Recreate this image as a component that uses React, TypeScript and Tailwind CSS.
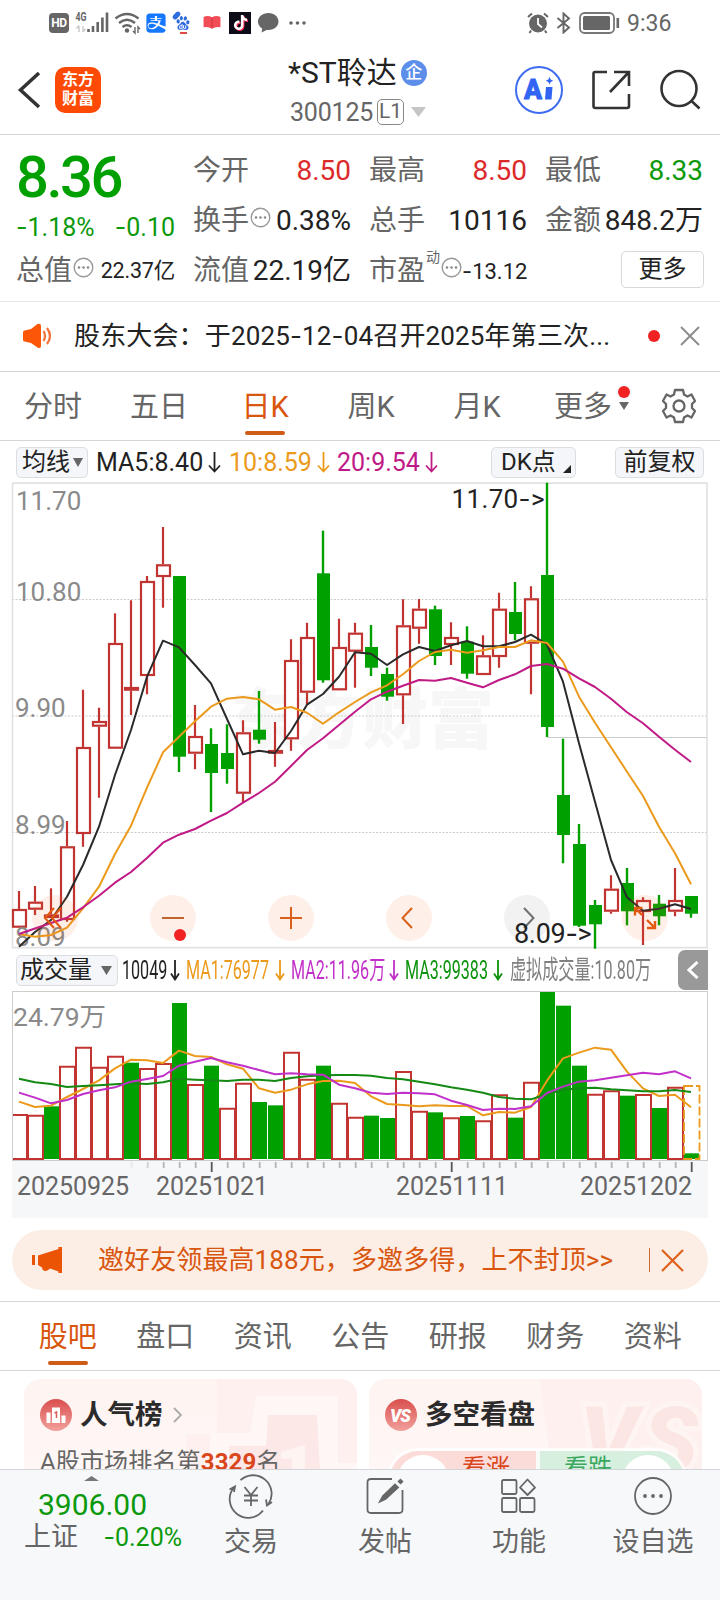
import React from 'react';
import clsx from 'clsx';
import { FaAlipay, FaTiktok } from 'react-icons/fa6';
import { SiBaidu } from 'react-icons/si';

const RED = '#c23431';
const GREEN = '#00a000';
const FONT = 'Roboto, "Noto Sans CJK SC", sans-serif';

const STEP = 16;
const cx = (i: number) => 19 + STEP * i;

type Candle = ['r' | 'g', number, number, number, number];

// [direction, high, body top, body bottom, low]
const candles: Candle[] = [
  ['r', 891, 909, 927.7, 928],
  ['r', 886, 901.7, 909.7, 915],
  ['r', 888.3, 914.5, 918, 918],
  ['r', 821, 846.3, 920, 921.7],
  ['r', 689.7, 747, 834, 846.7],
  ['r', 707.7, 721, 726.7, 797.7],
  ['r', 613.3, 643, 748.7, 748.7],
  ['r', 600.3, 687, 690.7, 715],
  ['r', 576, 581, 676, 694.3],
  ['r', 527, 564.3, 577, 607.7],
  ['g', 576, 576, 756.7, 772],
  ['r', 705, 736, 753.7, 769.3],
  ['g', 728.3, 744, 773, 812],
  ['g', 724.3, 753, 769, 783.7],
  ['r', 720.3, 732.3, 793.7, 802.3],
  ['g', 691, 729.7, 739.7, 743.7],
  ['r', 722, 750, 753.7, 766.7],
  ['r', 639.3, 660, 739.3, 750.7],
  ['r', 622.7, 637, 692.7, 705],
  ['g', 530.7, 573.3, 680.3, 682.7],
  ['r', 618.7, 647, 690.3, 690.3],
  ['r', 622.7, 632.7, 651.7, 687.7],
  ['g', 625, 647, 667.7, 676],
  ['g', 667.7, 674, 696.7, 700.7],
  ['r', 599.3, 625.3, 695.3, 724],
  ['r', 599, 608.7, 628.7, 643.7],
  ['g', 605.7, 609.3, 656, 665],
  ['r', 622.3, 637, 645, 665],
  ['g', 626.3, 641.7, 673.7, 678.7],
  ['r', 635.3, 655.3, 675, 675],
  ['r', 592.7, 608.7, 657, 667.7],
  ['g', 582, 612, 634, 640.3],
  ['r', 586.3, 598.3, 643.7, 694.3],
  ['g', 482.7, 575, 727, 737],
  ['g', 738.7, 795, 835, 863.3],
  ['g', 824, 844, 925.7, 927],
  ['g', 900, 905, 924.3, 948.7],
  ['r', 875.3, 888.7, 911.7, 913.7],
  ['g', 868, 883, 911.3, 925.3],
  ['r', 897.3, 900, 912, 945],
  ['g', 895, 903.7, 916.3, 925.3],
  ['r', 868, 900, 911.7, 916.3],
  ['g', 896, 896, 913.7, 917.7],
];

const ma5 = [
  946.7, 932, 920, 896.7, 865, 826.7, 775, 730, 676.7, 640.7, 647.3, 665, 683.3, 719, 754.3, 750.7, 753, 731, 704.7,
  694, 676.7, 652.3, 653.7, 665, 654.3, 647, 651, 645.3, 641, 646.3, 646.3, 642, 634.7, 644.3, 681.7, 743.3, 801.7,
  860, 897.3, 910.7, 908.7, 904.3, 909,
];
const ma10 = [
  934, 936.7, 935, 927.7, 908.3, 886.7, 854, 825.7, 787.7, 752.3, 736.7, 721.3, 706.7, 698.7, 697, 699.3, 709.7, 707,
  712.7, 723.7, 712.3, 702, 692.3, 685.3, 674.3, 661, 652, 649.7, 652.7, 650.3, 647, 647, 640.3, 643, 661.7, 696.7,
  722.7, 747.3, 771.7, 796, 826.7, 853.3, 884.3,
];
const ma20 = [
  934, 928.5, 923, 917.7, 907.3, 895.7, 882.7, 872, 858, 842.7, 834.7, 829, 820.7, 813, 802.7, 793, 781.7, 766, 750,
  738.3, 725, 711.7, 699.3, 691.7, 685.7, 680, 680.7, 678, 682.7, 687.3, 680, 674.3, 666, 664, 668.7, 678.3, 687,
  698.7, 712.3, 723.3, 736.7, 749.7, 762,
];

// volume bars and their averages, in thirds of a pixel below y=945
const volumes = [
  507, 509, 484, 362, 305, 365, 332, 353, 369, 354, 174, 417, 362, 488, 413, 471, 481, 320, 401, 362, 473, 515, 512,
  519, 378, 497, 502, 517, 513, 526, 448, 518, 410, 141, 182, 362, 446, 436, 452, 447, 489, 425, 625,
];
const volGreen = [2, 7, 10, 12, 15, 16, 19, 22, 23, 26, 28, 31, 33, 34, 35, 38, 40, 42];
const volMa1 = [
  470, 486, 482, 456, 432, 406, 370, 344, 346, 354, 317, 333, 336, 358, 371, 430, 443, 434, 418, 408, 407, 414, 454,
  477, 480, 484, 481, 483, 483, 511, 501, 503, 486, 407, 340, 323, 308, 314, 380, 430, 453, 449, 487,
];
const volMa2 = [
  443, 458, 475, 465, 447, 436, 427, 410, 402, 393, 362, 350, 339, 352, 362, 375, 388, 385, 388, 389, 419, 430, 443,
  447, 443, 445, 448, 467, 480, 495, 491, 492, 484, 444, 425, 410, 406, 398, 391, 383, 388, 379, 400,
];
const volMa3 = [
  401, 412, 417, 426, 423, 421, 418, 415, 417, 412, 401, 404, 406, 408, 404, 404, 408, 399, 394, 391, 390, 390, 392,
  399, 403, 410, 418, 427, 434, 443, 456, 461, 463, 447, 435, 430, 428, 433, 436, 439, 439, 435, 441,
];
const volY = (v: number) => 945 + v / 3;

const linePoints = (values: number[]) => values.map((y, i) => `${cx(i)},${y}`).join(' ');

// Roboto's hyphen is too short next to its digits
const Num: React.FC<{ children: string }> = ({ children }) => (
  <>
    {children.split(/(-)/).map((part, i) =>
      part === '-' ? (
        <span key={i} className="font-['Inter']">
          -
        </span>
      ) : (
        part
      )
    )}
  </>
);

const DownArrow: React.FC<{ className?: string; w?: number }> = ({ className, w = 13 }) => (
  <svg className={clsx('shrink-0', className)} width={w} height="22" viewBox={`0 0 ${w} 22`} fill="none" stroke="currentColor" strokeWidth="1.800">
    <path d={`M${w / 2} 1V20M1 14.500L${w / 2} 20.500L${w - 1} 14.500`} />
  </svg>
);

const MoreDots = () => (
  <svg className="-mt-[7px] ml-[1px] shrink-0" width="21" height="21" viewBox="0 0 21 21">
    <circle cx="10.5" cy="10.5" r="9.3" fill="none" stroke="#999" strokeWidth="1.4" />
    <circle cx="6" cy="10.5" r="1.3" fill="#888" />
    <circle cx="10.5" cy="10.5" r="1.3" fill="#888" />
    <circle cx="15" cy="10.5" r="1.3" fill="#888" />
  </svg>
);

const StatusBar = () => (
  <div className="flex h-[45px] shrink-0 items-center pl-[49px] text-[#666]">
    <div className="flex h-5 w-5 items-center justify-center rounded-[4px] bg-[#666] text-[12px] leading-none font-bold tracking-[-0.5px] text-white">
      HD
    </div>
    <svg className="ml-[6px]" width="34" height="24" viewBox="75 11 34 24">
      <text x="75.5" y="21" fontSize="12" fontWeight="700" fill="#666" textLength="11" lengthAdjust="spacingAndGlyphs">
        4G
      </text>
      <path d="M79 26v6M76.500 28.500L79 25.500M83 32v-6M85.500 29L83 32" stroke="#ccc" strokeWidth="1.500" fill="none" />
      <path d="M88.500 29v3M93 26v6M97.700 22v10M102.400 17.500v14.500M107 12.500v19.500" stroke="#666" strokeWidth="2.600" />
    </svg>
    <svg className="ml-[5px]" width="28" height="24" viewBox="114 10 28 24" fill="none" stroke="#666" strokeWidth="2.500">
      <path d="M115.500 17.500Q127 8.500 138.500 17.500M119 22Q127 15.500 135 22M122.500 26Q127 22.500 131.500 26" />
      <circle cx="127" cy="29.500" r="2.200" fill="#666" stroke="none" />
      <path d="M135 26v6l-2-2M138 32v-6l2 2" strokeWidth="1.400" />
    </svg>
    <FaAlipay className="ml-[3px] rounded-[5px] text-[#1677ff]" size={22} />
    <div className="relative ml-[9px] w-[16px]">
      <SiBaidu className="text-[#2f6bdc]" size={14} />
      <span className="absolute -top-[3px] -left-[4px] h-[5px] w-[9px] -rotate-45 rounded-full bg-[#2f6bdc]" />
      <span className="absolute -bottom-[4px] left-[4px] h-[2px] w-[7px] bg-[#e0484a]" />
    </div>
    <svg className="ml-[11px]" width="18" height="15" viewBox="0 0 18 16">
      <path d="M0 2Q5 0 9 2.500Q13 0 18 2V13Q13 12 9 14.500Q5 12 0 13Z" fill="#f24c57" />
      <path d="M9 2.500V14.500" stroke="#c93642" strokeWidth="1" />
    </svg>
    <div className="ml-[8px] flex h-[22px] w-[22px] items-center justify-center bg-[#0c0c18]">
      <FaTiktok size={15} className="text-white drop-shadow-[1px_1px_0_#fe2c55]" />
    </div>
    <svg className="ml-[7px]" width="21" height="20" viewBox="0 0 21 20">
      <path d="M10.500 0C4.500 0 0 3.800 0 8.600c0 3 1.600 5.400 4.200 7L3.600 19.500l5-2.500c.6.100 1.200.100 1.900.100 5.800 0 10-3.700 10-8.500S16.400 0 10.500 0Z" fill="#666" />
    </svg>
    <svg className="ml-[10px]" width="18" height="4" viewBox="0 0 18 4" fill="#666">
      <circle cx="2" cy="2" r="1.800" />
      <circle cx="8.500" cy="2" r="1.800" />
      <circle cx="15" cy="2" r="1.800" />
    </svg>
    <svg className="ml-[220px]" width="22" height="22" viewBox="0 0 22 22">
      <circle cx="11" cy="11.500" r="9" fill="#666" />
      <path d="M11 6v6l4 3.500" fill="none" stroke="#fff" strokeWidth="1.800" />
      <path d="M1 5L5 1.500M17 1.500L21 5M4 18.500L2.500 21M18 18.500L19.500 21" stroke="#666" strokeWidth="2" />
    </svg>
    <svg className="ml-[7px]" width="15" height="22" viewBox="0 0 15 22" fill="none" stroke="#666" strokeWidth="1.900">
      <path d="M1.500 6L13 15.500L7.500 20.500V1.500L13 6.500L1.500 16" />
    </svg>
    <svg className="ml-[8px]" width="42" height="22" viewBox="0 0 42 22">
      <rect x="1" y="1" width="34" height="20" rx="4.500" fill="none" stroke="#777" strokeWidth="1.800" />
      <rect x="4" y="4" width="27" height="14" rx="1.500" fill="#666" />
      <path d="M38.800 6v10" stroke="#666" strokeWidth="2.600" />
    </svg>
    <span className="mt-[2px] ml-[6px] text-[23px] leading-none">9:36</span>
  </div>
);

const Header = () => (
  <header className="flex h-[90px] shrink-0 items-center border-b border-[#d6d6d6] pl-[17px]">
    <svg width="24" height="38" viewBox="0 0 24 38" fill="none" stroke="#333" strokeWidth="3.500">
      <path d="M22 2L3.500 19L22 36" />
    </svg>
    <div className="ml-[14px] flex h-[46px] w-[46px] flex-col items-center justify-center rounded-[10px] bg-[#ff4a05] text-[16px] leading-[18.500px] font-bold text-white">
      <span>东方</span>
      <span>财富</span>
    </div>
    <div className="mt-[4px] ml-[187px] w-[146px]">
      <div className="flex items-center text-[30px] leading-none whitespace-nowrap text-[#222]">
        *ST聆达
        <span className="ml-[4px] flex h-[26px] w-[26px] items-center justify-center rounded-full bg-[#5d8eea] text-[17px] leading-none font-medium text-white">
          企
        </span>
      </div>
      <div className="mt-[10px] flex items-center text-[25px] leading-[26px] text-[#666]">
        <span className="w-[88px] pt-[2px] pl-[2px] tracking-[-0.200px]">300125</span>
        <span className="ml-[1px] flex h-[26px] w-[27px] items-center justify-center rounded-[5px] border-[1.500px] border-[#888] text-[21px] leading-none">
          L1
        </span>
        <svg className="ml-[7px]" width="15" height="10" viewBox="0 0 15 10">
          <path d="M0 0H15L7.500 10Z" fill="#c6c6c6" />
        </svg>
      </div>
    </div>
    <svg className="ml-[80px]" width="50" height="50" viewBox="514 65 50 50" fontFamily={FONT}>
      <circle cx="539" cy="90" r="23" fill="none" stroke="#3d6cf0" strokeWidth="2" />
      <text x="524" y="99" fontSize="28" fontWeight="900" fill="#3164f4" stroke="#3164f4" strokeWidth="0.800" textLength="18" lengthAdjust="spacingAndGlyphs">
        A
      </text>
      <path d="M546 87h6.500l-1 12.500h-6.500Z" fill="#3164f4" />
      <path d="M549.500 77l1.200 2.500 2.500 1.200-2.500 1.200-1.200 2.500-1.200-2.500-2.500-1.200 2.500-1.200Z" fill="#3164f4" />
    </svg>
    <svg className="ml-[27px]" width="40" height="40" viewBox="591 70 40 40" fill="none" stroke="#333" strokeWidth="2.600">
      <path d="M607 72H595Q593.500 72 593.500 74V106Q593.500 108 595.500 108H627Q629 108 629 106V94" />
      <path d="M614 72H629V86M628.500 72.500L610 92" />
    </svg>
    <svg className="ml-[29px]" width="41" height="41" viewBox="660 69 41 41" fill="none" stroke="#333" strokeWidth="2.600">
      <circle cx="679" cy="88.500" r="17.500" />
      <path d="M691.500 101L699.500 108.500" />
    </svg>
  </header>
);

interface CellProps {
  label: string;
  value: string;
  color?: string;
}

const Cell: React.FC<CellProps> = ({ label, value, color = 'text-[#222]' }) => (
  <div className="flex h-[50px] items-center justify-between">
    <span className="text-[#666]">{label}</span>
    <span className={color}>{value}</span>
  </div>
);

const Quote = () => (
  <section className="flex h-[167px] shrink-0 gap-[18px] border-b border-[#e6e6e6] pt-[11px] pr-4 pl-4 text-[28px] leading-none whitespace-nowrap">
    <div className="w-[159px]">
      <div className="h-[65px] pt-[2px] text-[58px] leading-none font-medium tracking-[-2.500px] text-[#00a000]">8.36</div>
      <div className="mb-[2px] flex h-[33px] items-center justify-between text-[25px] text-[#0c990c]">
        <span>
          <Num>-1.18%</Num>
        </span>
        <span>
          <Num>-0.10</Num>
        </span>
      </div>
      <div className="flex h-[50px] items-center">
        <span className="text-[#666]">总值</span>
        <MoreDots />
        <span className="ml-auto text-[21.500px] tracking-[-0.200px] text-[#222]">22.37亿</span>
      </div>
    </div>
    <div className="w-[158px]">
      <Cell label="今开" value="8.50" color="text-[#dc2a2a]" />
      <div className="flex h-[50px] items-center">
        <span className="text-[#666]">换手</span>
        <MoreDots />
        <span className="ml-auto text-[#222]">0.38%</span>
      </div>
      <Cell label="流值" value="22.19亿" />
    </div>
    <div className="w-[158px]">
      <Cell label="最高" value="8.50" color="text-[#dc2a2a]" />
      <Cell label="总手" value="10116" />
      <div className="flex h-[50px] items-center">
        <span className="text-[#666]">市盈</span>
        <span className="-mt-7 ml-[1px] text-[14px] text-[#666]">动</span>
        <MoreDots />
        <span className="ml-auto text-[22px] text-[#222]">
          <Num>-13.12</Num>
        </span>
      </div>
    </div>
    <div className="w-[158px]">
      <Cell label="最低" value="8.33" color="text-[#0c990c]" />
      <Cell label="金额" value="848.2万" />
      <div className="-mt-[2px] flex h-[50px] items-center justify-end">
        <button className="-mr-[1px] h-[37px] w-[83px] rounded-[5px] border border-[#d8d8d8] text-[24px] leading-none text-[#222]">更多</button>
      </div>
    </div>
  </section>
);

const Notice = () => (
  <div className="flex h-[70px] shrink-0 items-center border-b border-[#d6d6d6] pb-[1px] pl-[22px] text-[26px] leading-none text-[#222]">
    <svg width="31" height="26" viewBox="0 0 31 26">
      <path d="M1 9Q1 8 2.500 7.500L9 6L15.500 1Q19 0 19 3V23Q19 26 15.500 24.500L9 20L2.500 18.500Q1 18 1 17Z" fill="#fb5707" />
      <path d="M21.500 8Q24.500 13 21.500 18M25 5Q31 13 25 21" fill="none" stroke="#f4733a" strokeWidth="2.300" />
    </svg>
    <span className="ml-[21px] w-[561px] tracking-[0.150px] whitespace-nowrap">
      <Num>股东大会：于2025-12-04召开2025年第三次...</Num>
    </span>
    <span className="ml-[13px] h-3 w-3 rounded-full bg-[#f02222]" />
    <svg className="ml-[20px]" width="20" height="20" viewBox="0 0 20 20" stroke="#8c8c8c" strokeWidth="2">
      <path d="M1 1L19 19M19 1L1 19" />
    </svg>
  </div>
);

const periods = ['分时', '五日', '日K', '周K', '月K', '更多'];

const PeriodTabs = () => (
  <nav className="flex h-[69px] shrink-0 border-b border-[#d6d6d6] text-[29px] leading-none text-[#666]">
    {periods.map((name) => (
      <div key={name} className={clsx('relative flex w-[106px] items-center justify-center pt-[3px]', name === '日K' && 'text-[#d9560f]')}>
        {name}
        {name === '日K' && <span className="absolute bottom-[5px] h-[4.500px] w-10 rounded-full bg-[#cf5c18]" />}
        {name === '更多' && (
          <>
            <span className="absolute top-[14px] right-[6px] h-3 w-3 rounded-full bg-[#f02222]" />
            <svg className="absolute top-[30px] right-[7px]" width="10" height="8" viewBox="0 0 10 8">
              <path d="M0 0H10L5 8Z" fill="#666" />
            </svg>
          </>
        )}
      </div>
    ))}
    <div className="flex flex-1 items-center justify-center pl-[2px]">
      <svg width="36" height="36" viewBox="-18 -18 36 36" fill="none" stroke="#666" strokeWidth="2.300" strokeLinejoin="round">
        <path d="M-4 -16H4L5 -11.500L8.500 -9.500L12.500 -11.500L16 -5L13 -2V2L16 5L12.500 11.500L8.500 9.500L5 11.500L4 16H-4L-5 11.500L-8.500 9.500L-12.500 11.500L-16 5L-13 2V-2L-16 -5L-12.500 -11.500L-8.500 -9.500L-5 -11.500Z" />
        <circle r="5.500" />
      </svg>
    </div>
  </nav>
);

const chip = 'flex h-[31px] shrink-0 items-center rounded-[5px] border border-[#dcdee2] bg-[#f5f6f9] text-[24px] leading-none text-[#222]';

const MaRow = () => (
  <div className="flex h-[41px] shrink-0 items-center pt-[1px] pl-4 text-[25px] leading-none whitespace-nowrap">
    <div className={clsx(chip, 'w-[72px] pl-[5px]')}>
      均线
      <svg className="ml-[3px]" width="10" height="9" viewBox="0 0 10 9">
        <path d="M0 0H10L5 9Z" fill="#666" />
      </svg>
    </div>
    <span className="mt-[1px] ml-[8px] w-[112px] text-[#222]">MA5:8.40</span>
    <DownArrow className="text-[#222]" />
    <span className="mt-[1px] ml-[8px] w-[88px] text-[#eb9a1b]">10:8.59</span>
    <DownArrow className="text-[#eb9a1b]" />
    <span className="mt-[1px] ml-[7px] w-[88px] text-[#c01a86]">20:9.54</span>
    <DownArrow className="text-[#c01a86]" />
    <div className={clsx(chip, 'ml-[53px] w-[85px] pl-[9px]')}>
      DK点
      <svg className="mt-[14px] ml-[7px] shrink-0" width="8" height="8" viewBox="0 0 8 8">
        <path d="M8 0V8H0Z" fill="#222" />
      </svg>
    </div>
    <div className={clsx(chip, 'ml-[39px] w-[89px] justify-center')}>前复权</div>
  </div>
);

const KLineChart = () => (
  <div className="relative h-[467px] shrink-0">
    <svg width="720" height="467" viewBox="0 482 720 467" fontFamily={FONT}>
      <text x="230" y="743" fontSize="66" fontWeight="900" fill="#f7f7f7">
        东方财富
      </text>
      <path d="M12 599.500H707M12 716H707M12 832.500H707" stroke="#ccc" strokeDasharray="2 1.500" />
      <path d="M12.500 483V948M707 483V948" stroke="#e0e0e0" strokeWidth="1.500" />
      <path d="M12 483.200H708M12 947.700H708" stroke="#e2e2e2" strokeWidth="1.800" />
      <path d="M547 737.500H707" stroke="#ccc" />
      {candles.map(([dir, high, top, bottom, low], i) => {
        const x = cx(i);
        if (dir === 'g') {
          return (
            <g key={i} fill={GREEN}>
              <rect x={x - 1.2} y={high} width="2.4" height={low - high} />
              <rect x={x - 6} y={top} width="13" height={bottom - top} />
            </g>
          );
        }
        return (
          <g key={i} stroke={RED} strokeWidth="2.200">
            <path d={`M${x} ${high}V${top}M${x} ${bottom}V${low}`} />
            <rect x={x - 6} y={top + 1} width="13" height={Math.max(bottom - top - 2, 0.5)} fill={bottom - top < 4.5 ? RED : '#fff'} />
          </g>
        );
      })}
      <g fontSize="26" fill="#8a8a8a">
        <text x="16" y="509.500">11.70</text>
        <text x="16" y="600.500">10.80</text>
        <text x="15" y="716.500">9.90</text>
        <text x="15" y="833.500">8.99</text>
        <text x="15" y="945.500">8.09</text>
      </g>
      <g fill="none" strokeWidth="2" strokeLinejoin="round">
        <polyline points={linePoints(ma5)} stroke="#2a2a2a" />
        <polyline points={linePoints(ma10)} stroke="#eb9a1b" />
        <polyline points={linePoints(ma20)} stroke="#c01a86" />
      </g>
      <g fontSize="26" fill="#222">
        <text x="451.500" y="507.500" textLength="93">
          11.70<tspan fontFamily="Inter">-</tspan>&gt;
        </text>
      </g>
    </svg>

    {/* Floating chart controls */}
    <button className="absolute top-[413px] left-8 flex h-[46px] w-[46px] items-center justify-center rounded-full bg-[#f9651f]/10">
      <svg width="24" height="24" viewBox="0 0 24 24" fill="none" stroke="#e2590f" strokeWidth="2">
        <path d="M11 2L2 12L11 22M18 2L9 12L18 22" />
      </svg>
    </button>
    <button className="absolute top-[413px] left-[150px] flex h-[46px] w-[46px] items-center justify-center rounded-full bg-[#fef0e9]">
      <span className="h-[2px] w-[22px] bg-[#c0652f]" />
      <span className="absolute top-[34px] left-6 h-3 w-3 rounded-full bg-[#f02222]" />
    </button>
    <button className="absolute top-[413px] left-[268px] flex h-[46px] w-[46px] items-center justify-center rounded-full bg-[#fef0e9]">
      <svg width="22" height="22" viewBox="0 0 22 22" stroke="#d9601a" strokeWidth="2">
        <path d="M0 11H22M11 0V22" />
      </svg>
    </button>
    <button className="absolute top-[413px] left-[386px] flex h-[46px] w-[46px] items-center justify-center rounded-full bg-[#fef0e9]">
      <svg className="-ml-1" width="12" height="22" viewBox="0 0 12 22" fill="none" stroke="#d9601a" strokeWidth="2">
        <path d="M11 1L1.500 11L11 21" />
      </svg>
    </button>
    <button className="absolute top-[413px] left-[504px] flex h-[46px] w-[46px] items-center justify-center rounded-full bg-[#f2f2f2]">
      <svg className="ml-[3px]" width="12" height="22" viewBox="0 0 12 22" fill="none" stroke="#707070" strokeWidth="2">
        <path d="M1 1L10.500 11L1 21" />
      </svg>
    </button>
    <button className="absolute top-[413px] left-[622px] flex h-[46px] w-[46px] items-center justify-center rounded-full bg-[#f9651f]/10">
      <svg width="24" height="24" viewBox="0 0 24 24" fill="none" stroke="#e2590f" strokeWidth="2.400">
        <path d="M9.500 2H2V9.500M2 2L9 9M22 15V22H14M22 22L14 14" />
      </svg>
    </button>
    <span className="absolute top-[437px] left-[514px] text-[27px] leading-[30px] tracking-[-0.300px] whitespace-nowrap text-[#222]">
      <Num>8.09-&gt;</Num>
    </span>
  </div>
);

const Squeezed: React.FC<{ children: string; className: string }> = ({ children, className }) => (
  <div className={clsx('shrink-0', className)}>
    <span className="inline-block origin-left scale-x-[0.620]">{children}</span>
  </div>
);

const VolumeRow = () => (
  <div className="flex h-[42px] shrink-0 items-center pl-4 text-[26px] leading-none whitespace-nowrap">
    <div className={clsx(chip, 'w-[102px] pl-[3px]')}>
      成交量
      <svg className="ml-[9px]" width="11" height="9" viewBox="0 0 11 9">
        <path d="M0 0H11L5.500 9Z" fill="#666" />
      </svg>
    </div>
    <Squeezed className="ml-[4px] w-[48px] text-[#222]">10049</Squeezed>
    <DownArrow w={10} className="text-[#222]" />
    <Squeezed className="ml-[6px] w-[89px] text-[#eb9a1b]">MA1:76977</Squeezed>
    <DownArrow w={10} className="text-[#eb9a1b]" />
    <Squeezed className="ml-[6px] w-[98px] text-[#c130c9]">MA2:11.96万</Squeezed>
    <DownArrow w={10} className="text-[#c130c9]" />
    <Squeezed className="ml-[6px] w-[88px] text-[#0d930d]">MA3:99383</Squeezed>
    <DownArrow w={10} className="text-[#0d930d]" />
    <Squeezed className="ml-[7px] w-[168px] text-[#808080]">虚拟成交量:10.80万</Squeezed>
    <div className="flex h-10 w-[30px] shrink-0 items-center justify-center rounded-l-[7px] bg-[#999]">
      <svg width="12" height="18" viewBox="0 0 12 18" fill="none" stroke="#fff" strokeWidth="3">
        <path d="M10.500 1L2 9L10.500 17" />
      </svg>
    </div>
  </div>
);

const VolumeChart = () => (
  <svg className="shrink-0" width="720" height="227" viewBox="0 991 720 227" fontFamily={FONT}>
    <rect x="12" y="1160" width="696" height="58" fill="#f6f7f9" />
    <rect x="12.500" y="991.500" width="695" height="169" fill="#fff" stroke="#ccc" />
    {volumes.map((v, i) => {
      const x = cx(i);
      const y = volY(v);
      if (volGreen.includes(i)) {
        return <rect key={i} x={x - 7} y={y} width="15" height={1159 - y} fill={GREEN} />;
      }
      // the first bar is clipped by the frame and has no left side
      const d = i === 0 ? `M13 ${y + 1}H${x + 8}V1159H13` : `M${x - 7} 1159V${y + 1}H${x + 8}V1159Z`;
      return <path key={i} d={d} fill="#fff" stroke={RED} strokeWidth="2" />;
    })}
    <rect x="684" y="1086" width="15.500" height="73" fill="none" stroke="#eb9a1b" strokeWidth="1.800" strokeDasharray="9 3" />
    <g fill="none" strokeWidth="2" strokeLinejoin="round">
      <polyline points={linePoints(volMa1.map(volY))} stroke="#eb9a1b" />
      <polyline points={linePoints(volMa3.map(volY))} stroke="#148a14" />
      <polyline points={linePoints(volMa2.map(volY))} stroke="#c130c9" />
    </g>
    <text x="13" y="1025.500" fontSize="26.500" fill="#8a8a8a">
      24.79万
    </text>
    {candles.map((_, i) => {
      if (i < 7) return null;
      const major = i === 12 || i === 27 || i === 42;
      return (
        <path
          key={i}
          d={`M${cx(i) + 0.7} 1162V${major ? 1172 : 1168}`}
          stroke={major ? '#555' : '#b5b5b5'}
          strokeWidth="1.800"
          opacity={i === 7 ? 0.2 : i === 8 ? 0.6 : 1}
        />
      );
    })}
    <g fontSize="25" fill="#666">
      <text x="17" y="1195" textLength="112">20250925</text>
      <text x="156" y="1195" textLength="112">20251021</text>
      <text x="396" y="1195" textLength="112">20251111</text>
      <text x="580" y="1195" textLength="112">20251202</text>
    </g>
  </svg>
);

const Banner = () => (
  <div className="mx-3 mt-3 flex h-[60px] shrink-0 items-center rounded-full bg-[#fceee5] pl-5 text-[26px] leading-none text-[#d9560f]">
    <svg width="30" height="26" viewBox="0 0 30 26" fill="#ea5404">
      <path d="M0 8H3V18H0ZM6 8.500L26.500 2V0H30V26H26.500V24.500L18 21.500Q15 25 11.500 23.500Q10 22.500 10 20.500L6 18Z" />
    </svg>
    <span className="ml-[36px] w-[517px] tracking-[0.100px] whitespace-nowrap">邀好友领最高188元，多邀多得，上不封顶&gt;&gt;</span>
    <span className="ml-[34px] h-6 w-px bg-[#c96a35]" />
    <svg className="ml-[11px]" width="23" height="23" viewBox="0 0 23 23" stroke="#e0611c" strokeWidth="2.200">
      <path d="M1 1L22 22M22 1L1 22" />
    </svg>
  </div>
);

const sections = ['股吧', '盘口', '资讯', '公告', '研报', '财务', '资料'];

const SectionTabs = () => (
  <nav className="mt-[11px] flex h-[70px] shrink-0 border-y border-[#d6d6d6] pl-[19px] text-[29px] leading-none text-[#666]">
    {sections.map((name, i) => (
      <div key={name} className={clsx('relative flex w-[97.500px] items-center justify-center pt-[3px]', i === 0 && 'text-[#d9560f]')}>
        {name}
        {i === 0 && <span className="absolute bottom-[5px] h-[4px] w-10 rounded-full bg-[#cf5c18]" />}
      </div>
    ))}
  </nav>
);

const Cards = () => (
  <div className="flex min-h-0 flex-1 gap-3 overflow-hidden pt-[8px] pl-6">
    <div className="relative h-[180px] w-[333px] shrink-0 overflow-hidden rounded-2xl bg-gradient-to-b from-[#fef4f2] to-[#fffaf9]">
      <svg className="absolute top-0 right-0" width="180" height="92" viewBox="153 0 180 92">
        <path d="M193 0H333V92H162V55H193Z" fill="#fdf0ee" />
        <path d="M232 17H314V84H333V92H186V54H226Z" fill="#fef7f5" />
        <path d="M244 36H293L296 92H205V67H242Z" fill="#fce8e6" />
        <path d="M257 73L281 66V92H268V79L257 80Z" fill="#fef4f2" />
      </svg>
      <div className="relative flex items-center pt-5 pl-4">
        <svg width="32" height="32" viewBox="0 0 32 32">
          <defs>
            <linearGradient id="badge" x1="0" y1="0" x2="0" y2="1">
              <stop offset="0" stopColor="#d94f4d" />
              <stop offset="1" stopColor="#f1a09c" />
            </linearGradient>
          </defs>
          <circle cx="16" cy="16" r="16" fill="url(#badge)" />
          <path d="M6.500 13.500H10.500V24H6.500ZM12 8.500H20V24H12ZM21.500 16.500H25.500V24H21.500Z" fill="#fff" />
          <path d="M14.500 14L16.500 13V19" fill="none" stroke="#d9615e" strokeWidth="1.600" />
        </svg>
        <span className="ml-[8px] text-[27.500px] leading-[32px] font-bold text-[#2b2b2b]">人气榜</span>
        <svg className="ml-[10px]" width="9" height="16" viewBox="0 0 9 16" fill="none" stroke="#aaa" strokeWidth="1.800">
          <path d="M1 1L8 8L1 15" />
        </svg>
      </div>
      <div className="relative mt-[18px] pl-4 text-[24px] leading-[26px] tracking-[0.150px] whitespace-nowrap text-[#666]">
        A股市场排名第<span className="font-bold text-[#d9461b]">3329</span>名
      </div>
    </div>

    <div className="relative h-[180px] w-[333px] shrink-0 overflow-hidden rounded-2xl bg-gradient-to-b from-[#fef4f2] to-[#fffaf9]">
      <svg className="absolute top-0 right-0" width="162" height="92" viewBox="0 0 162 92" fontFamily={FONT}>
        <path d="M0 0H162V92H12Z" fill="#fdf0ee" />
        <text x="40" y="92" fontSize="90" fontWeight="900" fontStyle="italic" fill="#fbe6e4" stroke="#fef5f3" strokeWidth="10" paintOrder="stroke" textLength="118">
          VS
        </text>
      </svg>
      <div className="relative flex items-center pt-5 pl-4">
        <svg width="32" height="32" viewBox="0 0 32 32" fontFamily={FONT}>
          <circle cx="16" cy="16" r="16" fill="url(#badge)" />
          <text x="5" y="22.500" fontSize="17.500" fontWeight="900" fontStyle="italic" fill="#fff" textLength="21">
            VS
          </text>
        </svg>
        <span className="ml-[8px] text-[27.500px] leading-[32px] font-bold text-[#2b2b2b]">多空看盘</span>
      </div>
      <div className="relative mt-[17px] ml-[18px] flex h-[62px] w-[300px] overflow-hidden rounded-full border-[3px] border-white/80 text-[24px] leading-none">
        <div className="w-[146px] bg-[#fcdcd9] pt-[5px] pl-[72px] text-[#d9461b]">看涨</div>
        <div className="flex-1 border-l-4 border-white/80 bg-[#d7efdf] pt-[5px] pl-[24px] text-[#3aa860]">看跌</div>
        <span className="absolute top-[4px] left-[7px] h-[52px] w-[52px] rounded-full bg-white" />
        <span className="absolute top-[4px] right-[10px] h-[52px] w-[52px] rounded-full bg-white" />
      </div>
    </div>
  </div>
);

const actions = [
  {
    name: '交易',
    icon: (
      <>
        <path d="M10.500 4.200A18.500 18.500 0 0 1 38.500 28M33 34.500A18.500 18.500 0 0 1 3.500 12M-0.500 13.500L5 10.500L4 16M36 23.500L37 29.500L42 26" />
        <path d="M14.500 11L21 19L27.500 11M21 19V30M14 19.500H28M14 24.500H28" />
      </>
    ),
  },
  {
    name: '发帖',
    icon: (
      <>
        <path d="M28 3H7Q3.500 3 3.500 6.500V33.500Q3.500 37 7 37H35Q38.500 37 38.500 33.500V14" />
        <path d="M16 25.500L19 20L31 8.500L34 11.500L21.500 23Z" fill="#666" />
        <path d="M35 7L38 4" strokeWidth="4.500" />
      </>
    ),
  },
  {
    name: '功能',
    icon: (
      <>
        <rect x="4" y="4" width="14.500" height="14" rx="1.500" />
        <rect x="4" y="22" width="14.500" height="14" rx="1.500" />
        <rect x="22" y="22" width="14.500" height="14" rx="1.500" />
        <path d="M29.500 3.500L37 11.500L29.500 19L22 11.500Z" strokeLinejoin="round" />
      </>
    ),
  },
  {
    name: '设自选',
    icon: (
      <>
        <circle cx="21" cy="20" r="18" />
        <g fill="#666" stroke="none">
          <circle cx="13" cy="20" r="1.900" />
          <circle cx="21" cy="20" r="1.900" />
          <circle cx="29" cy="20" r="1.900" />
        </g>
      </>
    ),
  },
];

const BottomBar = () => (
  <footer className="flex h-[131px] shrink-0 border-t border-[#d2d5d9] bg-[#f6f8fa] leading-none">
    <div className="w-[184px] text-[#0c990c]">
      <svg className="mt-[6px] ml-[84px]" width="15" height="5" viewBox="0 0 15 5">
        <path d="M0 5H15L7.500 0Z" fill="#777" />
      </svg>
      <div className="mt-[9px] pl-[38px] text-[30px]">3906.00</div>
      <div className="mt-[4px] flex items-center text-[25px]">
        <span className="ml-6 text-[27px] text-[#666]">上证</span>
        <span className="ml-auto pr-[2px]">
          <Num>-0.20%</Num>
        </span>
      </div>
    </div>
    {actions.map(({ name, icon }) => (
      <div key={name} className="flex w-[134px] flex-col items-center pt-[6px] text-[27px] text-[#666]">
        <svg className="overflow-visible" width="42" height="40" viewBox="0 0 42 40" fill="none" stroke="#666" strokeWidth="1.800">
          {icon}
        </svg>
        <span className="mt-[13px]">{name}</span>
      </div>
    ))}
  </footer>
);

export default function App() {
  return (
    <div className="flex h-[1600px] w-[720px] flex-col overflow-hidden bg-white font-[Roboto,'Noto_Sans_CJK_SC',sans-serif]">
      <StatusBar />
      <Header />
      <Quote />
      <Notice />
      <PeriodTabs />
      <MaRow />
      <KLineChart />
      <VolumeRow />
      <VolumeChart />
      <Banner />
      <SectionTabs />
      <Cards />
      <BottomBar />
    </div>
  );
}
